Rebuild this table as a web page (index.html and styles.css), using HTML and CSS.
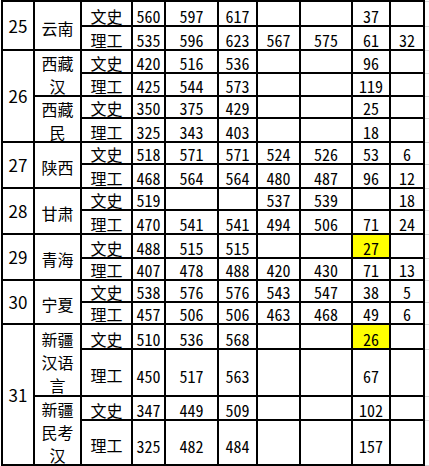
FILE: index.html
```html
<!DOCTYPE html>
<html lang="zh-CN">
<head>
<meta charset="utf-8">
<title>分数线</title>
<link rel="stylesheet" href="styles.css">
</head>
<body>
<table class="grid">
  <colgroup>
    <col class="c-idx"><col class="c-prov"><col class="c-typ"><col class="c-a"><col class="c-b"><col class="c-c"><col class="c-d"><col class="c-e"><col class="c-f"><col class="c-g"><col class="c-x">
  </colgroup>
  <tbody>
    <tr class="h25">
      <td class="idx" rowspan="2">25</td><td class="prov" rowspan="2">云南</td>
      <td class="typ">文史</td><td class="num">560</td><td class="num">597</td><td class="num">617</td><td class="num"></td><td class="num"></td><td class="num">37</td><td class="num"></td><td class="gx"></td>
    </tr>
    <tr class="h24">
      <td class="typ">理工</td><td class="num">535</td><td class="num">596</td><td class="num">623</td><td class="num">567</td><td class="num">575</td><td class="num">61</td><td class="num">32</td><td class="gx"></td>
    </tr>
    <tr class="h23">
      <td class="idx" rowspan="4">26</td><td class="prov" rowspan="2"><div class="wrap">西藏汉</div></td>
      <td class="typ">文史</td><td class="num">420</td><td class="num">516</td><td class="num">536</td><td class="num"></td><td class="num"></td><td class="num">96</td><td class="num"></td><td class="gx"></td>
    </tr>
    <tr class="h23">
      <td class="typ">理工</td><td class="num">425</td><td class="num">544</td><td class="num">573</td><td class="num"></td><td class="num"></td><td class="num">119</td><td class="num"></td><td class="gx"></td>
    </tr>
    <tr class="h22">
      <td class="prov" rowspan="2"><div class="wrap">西藏民</div></td>
      <td class="typ">文史</td><td class="num">350</td><td class="num">375</td><td class="num">429</td><td class="num"></td><td class="num"></td><td class="num">25</td><td class="num"></td><td class="gx"></td>
    </tr>
    <tr class="h24">
      <td class="typ">理工</td><td class="num">325</td><td class="num">343</td><td class="num">403</td><td class="num"></td><td class="num"></td><td class="num">18</td><td class="num"></td><td class="gx"></td>
    </tr>
    <tr class="h22">
      <td class="idx" rowspan="2">27</td><td class="prov" rowspan="2">陕西</td>
      <td class="typ">文史</td><td class="num">518</td><td class="num">571</td><td class="num">571</td><td class="num">524</td><td class="num">526</td><td class="num">53</td><td class="num">6</td><td class="gx"></td>
    </tr>
    <tr class="h24">
      <td class="typ">理工</td><td class="num">468</td><td class="num">564</td><td class="num">564</td><td class="num">480</td><td class="num">487</td><td class="num">96</td><td class="num">12</td><td class="gx"></td>
    </tr>
    <tr class="h22">
      <td class="idx" rowspan="2">28</td><td class="prov" rowspan="2">甘肃</td>
      <td class="typ">文史</td><td class="num">519</td><td class="num"></td><td class="num"></td><td class="num">537</td><td class="num">539</td><td class="num"></td><td class="num">18</td><td class="gx"></td>
    </tr>
    <tr class="h24">
      <td class="typ">理工</td><td class="num">470</td><td class="num">541</td><td class="num">541</td><td class="num">494</td><td class="num">506</td><td class="num">71</td><td class="num">24</td><td class="gx"></td>
    </tr>
    <tr class="h24">
      <td class="idx" rowspan="2">29</td><td class="prov" rowspan="2">青海</td>
      <td class="typ">文史</td><td class="num">488</td><td class="num">515</td><td class="num">515</td><td class="num"></td><td class="num"></td><td class="num hl">27</td><td class="num"></td><td class="gx"></td>
    </tr>
    <tr class="h22">
      <td class="typ">理工</td><td class="num">407</td><td class="num">478</td><td class="num">488</td><td class="num">420</td><td class="num">430</td><td class="num">71</td><td class="num">13</td><td class="gx"></td>
    </tr>
    <tr class="h22">
      <td class="idx" rowspan="2">30</td><td class="prov" rowspan="2">宁夏</td>
      <td class="typ">文史</td><td class="num">538</td><td class="num">576</td><td class="num">576</td><td class="num">543</td><td class="num">547</td><td class="num">38</td><td class="num">5</td><td class="gx"></td>
    </tr>
    <tr class="h22">
      <td class="typ">理工</td><td class="num">457</td><td class="num">506</td><td class="num">506</td><td class="num">463</td><td class="num">468</td><td class="num">49</td><td class="num">6</td><td class="gx"></td>
    </tr>
    <tr class="h25">
      <td class="idx" rowspan="4">31</td><td class="prov" rowspan="2"><div class="wrap">新疆汉语言</div></td>
      <td class="typ">文史</td><td class="num">510</td><td class="num">536</td><td class="num">568</td><td class="num"></td><td class="num"></td><td class="num hl">26</td><td class="num"></td><td class="gx"></td>
    </tr>
    <tr class="h47 mid">
      <td class="typ">理工</td><td class="num">450</td><td class="num">517</td><td class="num">563</td><td class="num"></td><td class="num"></td><td class="num">67</td><td class="num"></td><td class="gx"></td>
    </tr>
    <tr class="h24">
      <td class="prov" rowspan="2"><div class="wrap">新疆民考汉</div></td>
      <td class="typ">文史</td><td class="num">347</td><td class="num">449</td><td class="num">509</td><td class="num"></td><td class="num"></td><td class="num">102</td><td class="num"></td><td class="gx"></td>
    </tr>
    <tr class="h45 mid">
      <td class="typ">理工</td><td class="num">325</td><td class="num">482</td><td class="num">484</td><td class="num"></td><td class="num"></td><td class="num">157</td><td class="num"></td><td class="gx"></td>
    </tr>
  </tbody>
</table>
</body>
</html>
```

FILE: styles.css
```css
html, body {
  margin: 0;
  padding: 0;
  background: #ffffff;
}

.grid {
  border-collapse: collapse;
  table-layout: fixed;
  width: 427px;
  margin: 0 0 0 1px;
  color: #000000;
}

.c-idx { width: 32px; }
.c-prov { width: 47px; }
.c-typ { width: 51px; }
.c-a { width: 33px; }
.c-b { width: 53px; }
.c-c { width: 39px; }
.c-d { width: 43px; }
.c-e { width: 52px; }
.c-f { width: 38px; }
.c-g { width: 34px; }
.c-x { width: 5px; }

.grid td {
  border: 2px solid #000000;
  padding: 0;
  text-align: center;
  white-space: nowrap;
}

.grid td.gx {
  border-top: 1px solid #d9d9d9;
  border-bottom: 1px solid #d9d9d9;
  border-right: none;
}

.h21 { height: 21px; }
.h22 { height: 22px; }
.h23 { height: 23px; }
.h24 { height: 24px; }
.h25 { height: 25px; }
.h45 { height: 45px; }
.h47 { height: 47px; }

.idx {
  font-family: "Noto Sans CJK SC", "Noto Sans", sans-serif;
  font-size: 17px;
  line-height: 20px;
  vertical-align: middle;
}

.grid td.prov {
  font-family: "Noto Sans CJK SC", sans-serif;
  font-size: 16px;
  line-height: 20px;
  vertical-align: middle;
  white-space: normal;
  padding: 4px 0 0 0;
}

.wrap {
  line-height: 23px;
  margin: -6px 0;
  word-break: break-all;
}

.grid td.typ {
  font-family: "Noto Sans CJK SC", sans-serif;
  font-size: 16px;
  line-height: 14px;
  vertical-align: bottom;
  padding-bottom: 2px;
}

.grid td.num {
  font-family: "Noto Sans Mono CJK SC", "DejaVu Sans Mono", monospace;
  font-size: 16px;
  line-height: 14px;
  vertical-align: bottom;
  padding-bottom: 2.5px;
}

.grid .mid td.typ,
.grid .mid td.num {
  vertical-align: middle;
  padding-bottom: 0;
}

.grid .mid td.typ { padding-top: 5px; }
.grid .mid td.num { padding-top: 6px; }

.grid td.hl {
  background: #ffff00;
}
```
